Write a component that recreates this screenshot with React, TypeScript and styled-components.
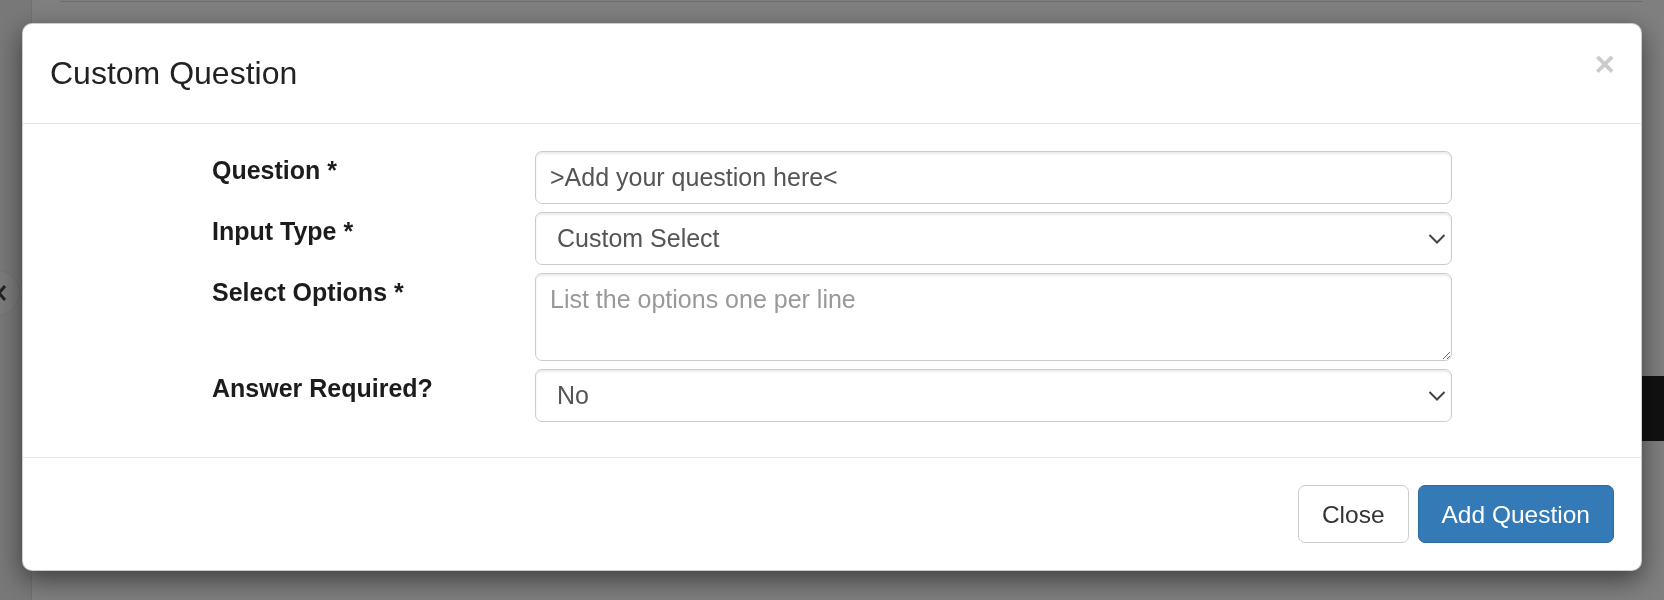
import React from 'react';
import styled, { createGlobalStyle, css } from 'styled-components';

const GlobalStyle = createGlobalStyle`
  html, body {
    margin: 0;
    padding: 0;
    height: 100%;
  }
  body {
    font-family: "Liberation Sans", Arial, Helvetica, sans-serif;
    color: #333;
    background: #fff;
    overflow: hidden;
  }
  * {
    box-sizing: border-box;
  }
`;

// page behind the dialog
const Page = styled.div`
  display: grid;
  grid-template-columns: 32px 1fr 22px;
  width: 1664px;
  height: 600px;
`;

const Sidebar = styled.div`
  background: #f0f0f0;
  border-right: 1px solid #e2e2e2;
  overflow: hidden;
`;

const SlideButton = styled.div`
  display: flex;
  align-items: center;
  justify-content: flex-end;
  width: 46px;
  height: 46px;
  margin-top: 270px;
  margin-left: -26px;
  padding-right: 12px;
  border-radius: 50%;
  border: 1px solid #e4e4e4;
  background: #f6f6f6;
  color: #444;
`;

const MainArea = styled.div`
  display: flex;
  flex-direction: column;
`;

const TopRule = styled.div`
  height: 2px;
  margin-left: 28px;
  border-bottom: 1px solid #d8d8d8;
`;

const RightArea = styled.div`
  display: flex;
  flex-direction: column;
`;

const DarkBlock = styled.div`
  margin-top: 376px;
  height: 65px;
  background: #222;
`;

// dialog layer
const Backdrop = styled.div`
  position: fixed;
  inset: 0;
  background: rgba(0, 0, 0, 0.5);
`;

const ModalLayer = styled.div`
  position: fixed;
  inset: 0;
  padding: 23px 22px 0 22px;
`;

const Modal = styled.div`
  background: #fff;
  border: 1px solid rgba(0, 0, 0, 0.2);
  border-radius: 10px;
  box-shadow: 0 9px 26px rgba(0, 0, 0, 0.5);
`;

const Header = styled.div`
  display: flex;
  justify-content: space-between;
  align-items: flex-start;
  padding: 26px 26px 27px 27px;
  border-bottom: 1px solid #e5e5e5;
`;

const Title = styled.h4`
  margin: 0;
  font-size: 32px;
  line-height: 46px;
  font-weight: 400;
  color: #222;
`;

const CloseX = styled.button`
  margin-top: -4px;
  padding: 0;
  border: 0;
  background: none;
  font-family: inherit;
  font-size: 35px;
  font-weight: 700;
  line-height: 1;
  color: #000;
  opacity: 0.2;
  cursor: pointer;
`;

const Body = styled.div`
  padding: 27px 26px 35px 26px;
`;

const FormGrid = styled.div`
  display: grid;
  grid-template-columns: 323px 917px;
  row-gap: 8px;
  padding-left: 163px;
`;

const Label = styled.label`
  padding-top: 2px;
  font-size: 25px;
  line-height: 35px;
  font-weight: 700;
  color: #1c1c1c;
`;

const field = css`
  display: block;
  width: 100%;
  margin: 0;
  border: 1px solid #ccc;
  border-radius: 7px;
  box-shadow: inset 0 2px 2px rgba(0, 0, 0, 0.075);
  background: #fff;
  font-family: inherit;
  font-size: 25px;
  line-height: 35px;
  color: #555;
  outline: none;
`;

const TextInput = styled.input`
  ${field};
  height: 53px;
  padding: 8px 14px;
`;

const TextArea = styled.textarea`
  ${field};
  height: 88px;
  padding: 8px 14px;
  resize: vertical;

  &::placeholder {
    color: #999;
  }
`;

const SelectWrap = styled.div`
  position: relative;
`;

const Select = styled.select`
  ${field};
  height: 53px;
  padding: 8px 40px 8px 21px;
  appearance: none;
`;

const Chevron = styled.svg`
  position: absolute;
  right: 6px;
  top: 50%;
  transform: translateY(-50%);
  pointer-events: none;
`;

const Footer = styled.div`
  display: flex;
  justify-content: flex-end;
  gap: 9px;
  padding: 27px 27px 27px 27px;
  border-top: 1px solid #e5e5e5;
`;

const Button = styled.button<{ $primary?: boolean }>`
  height: 58px;
  padding: 0 23px;
  border-radius: 7px;
  border: 1px solid ${(p) => (p.$primary ? '#2e6da4' : '#ccc')};
  background: ${(p) => (p.$primary ? '#337ab7' : '#fff')};
  color: ${(p) => (p.$primary ? '#fff' : '#333')};
  font-family: inherit;
  font-size: 24.5px;
  line-height: 35px;
  cursor: pointer;
`;

const ArrowDown = () => (
  <Chevron width="18" height="11" viewBox="0 0 18 11">
    <polyline
      points="1.5,1.5 9,9 16.5,1.5"
      fill="none"
      stroke="#444"
      strokeWidth="2"
    />
  </Chevron>
);

const App: React.FC = () => {
  return (
    <>
      <GlobalStyle />
      <Page>
        <Sidebar>
          <SlideButton>
            <svg width="10" height="18" viewBox="0 0 10 18">
              <polyline
                points="8,2 2,9 8,16"
                fill="none"
                stroke="#444"
                strokeWidth="3"
              />
            </svg>
          </SlideButton>
        </Sidebar>
        <MainArea>
          <TopRule />
        </MainArea>
        <RightArea>
          <DarkBlock />
        </RightArea>
      </Page>
      <Backdrop />
      <ModalLayer>
        <Modal>
          <Header>
            <Title>Custom Question</Title>
            <CloseX type="button">×</CloseX>
          </Header>
          <Body>
            <FormGrid>
              <Label>Question *</Label>
              <TextInput defaultValue=">Add your question here<" />

              <Label>Input Type *</Label>
              <SelectWrap>
                <Select defaultValue="custom">
                  <option value="text">Text</option>
                  <option value="custom">Custom Select</option>
                </Select>
                <ArrowDown />
              </SelectWrap>

              <Label>Select Options *</Label>
              <TextArea placeholder="List the options one per line" />

              <Label>Answer Required?</Label>
              <SelectWrap>
                <Select defaultValue="no">
                  <option value="no">No</option>
                  <option value="yes">Yes</option>
                </Select>
                <ArrowDown />
              </SelectWrap>
            </FormGrid>
          </Body>
          <Footer>
            <Button type="button">Close</Button>
            <Button type="button" $primary>
              Add Question
            </Button>
          </Footer>
        </Modal>
      </ModalLayer>
    </>
  );
};

export default App;
